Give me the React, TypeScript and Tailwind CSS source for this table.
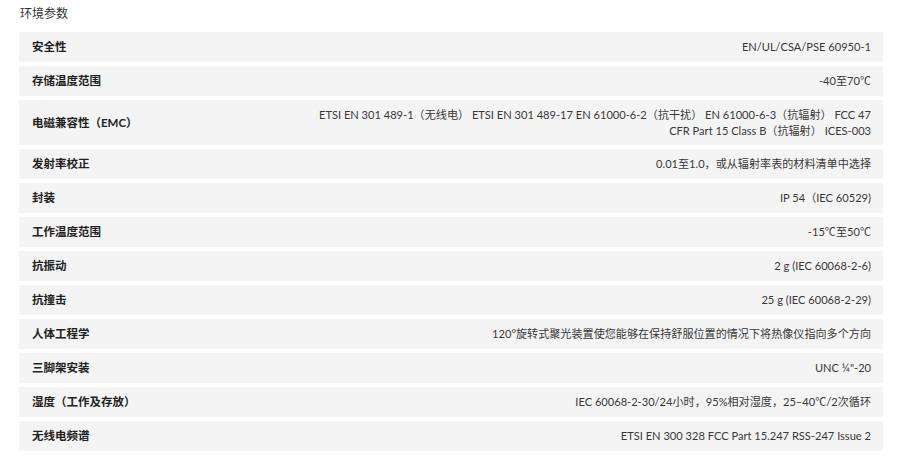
import React from "react";

const rows: { label: string; value: React.ReactNode; tall?: boolean }[] = [
  { label: "安全性", value: "EN/UL/CSA/PSE 60950-1" },
  { label: "存储温度范围", value: "-40至70℃" },
  {
    label: "电磁兼容性（EMC）",
    value: (
      <>
        <span className="block">ETSI EN 301 489-1（无线电） ETSI EN 301 489-17 EN 61000-6-2（抗干扰） EN 61000-6-3（抗辐射） FCC 47</span>
        <span className="block">CFR Part 15 Class B（抗辐射） ICES-003</span>
      </>
    ),
    tall: true,
  },
  { label: "发射率校正", value: "0.01至1.0，或从辐射率表的材料清单中选择" },
  { label: "封装", value: "IP 54（IEC 60529)" },
  { label: "工作温度范围", value: "-15℃至50℃" },
  { label: "抗振动", value: "2 g (IEC 60068-2-6)" },
  { label: "抗撞击", value: "25 g (IEC 60068-2-29)" },
  { label: "人体工程学", value: "120°旋转式聚光装置使您能够在保持舒服位置的情况下将热像仪指向多个方向" },
  { label: "三脚架安装", value: "UNC ¼\"-20" },
  { label: "湿度（工作及存放）", value: "IEC 60068-2-30/24小时，95%相对湿度，25–40℃/2次循环" },
  { label: "无线电频谱", value: "ETSI EN 300 328 FCC Part 15.247 RSS-247 Issue 2" },
];

export default function App() {
  return (
    <div
      className="w-[900px] h-[456px] bg-white pl-[19px] pr-[17px] pt-[5px] overflow-hidden"
      style={{ fontFamily: '"Lato", "Noto Sans CJK SC", sans-serif' }}
    >
      <div className="text-[12px] leading-[18px] text-[#333] pl-[1px] mb-[9px]">环境参数</div>
      <div className="flex flex-col gap-[4px]">
        {rows.map((r) => (
          <div
            key={r.label}
            className={`flex items-center justify-between bg-[#f4f4f4] pl-[13px] pr-[12px] ${r.tall ? "h-[45px]" : "h-[30px]"}`}
          >
            <div className="text-[11.5px] font-bold text-[#222] whitespace-nowrap">{r.label}</div>
            <div className="text-[11.1px] leading-[16px] text-[#383838] text-right whitespace-nowrap">{r.value}</div>
          </div>
        ))}
      </div>
    </div>
  );
}
